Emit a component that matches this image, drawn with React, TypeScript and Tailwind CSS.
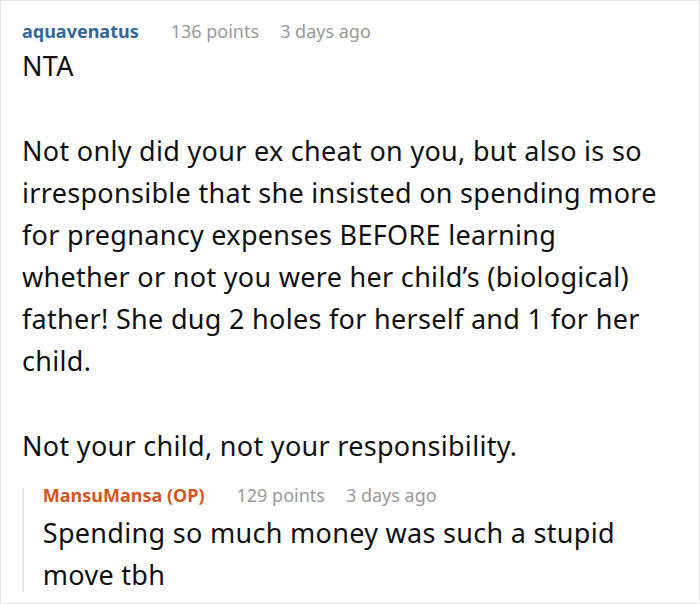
export default function App() {
  return (
    <div
      className="w-[700px] h-[604px] bg-white border border-[#e6e6e6] overflow-hidden"
      style={{ fontFamily: '"Noto Sans", "Open Sans", sans-serif' }}
    >
      <div className="pl-[21px] pt-[17px]">
        <div className="flex items-baseline text-[18px] leading-[26px]">
          <span className="font-bold text-[#336699]">aquavenatus</span>
          <span className="ml-[32px] text-[#999999]">136 points</span>
          <span className="ml-[21px] text-[#999999]">3 days ago</span>
        </div>
        <div className="text-[27px] leading-[42px] tracking-[0.3px] text-[#111111] mt-[1px] pr-[36px]">
          <p>NTA</p>
          <p className="mt-[43px]">
            Not only did your ex cheat on you, but also is so irresponsible that she insisted on spending more for pregnancy expenses BEFORE learning whether or not you were her child’s (biological) father! She dug 2 holes for herself and 1 for her child.
          </p>
          <p className="mt-[43px]">Not your child, not your responsibility.</p>
        </div>
        <div className="mt-[15px] flex">
          <div className="w-[2px] bg-[#e8e8e8] mt-[6px] mb-[4px]" />
          <div className="pl-[19px]">
            <div className="flex items-baseline text-[18px] leading-[26px]">
              <span className="font-bold text-[#d4561f]">MansuMansa (OP)</span>
              <span className="ml-[32px] text-[#999999]">129 points</span>
              <span className="ml-[21px] text-[#999999]">3 days ago</span>
            </div>
            <div className="text-[27px] leading-[42px] tracking-[0.3px] text-[#111111] mt-[4px] pr-[40px]">
              Spending so much money was such a stupid move tbh
            </div>
          </div>
        </div>
      </div>
    </div>
  );
}
